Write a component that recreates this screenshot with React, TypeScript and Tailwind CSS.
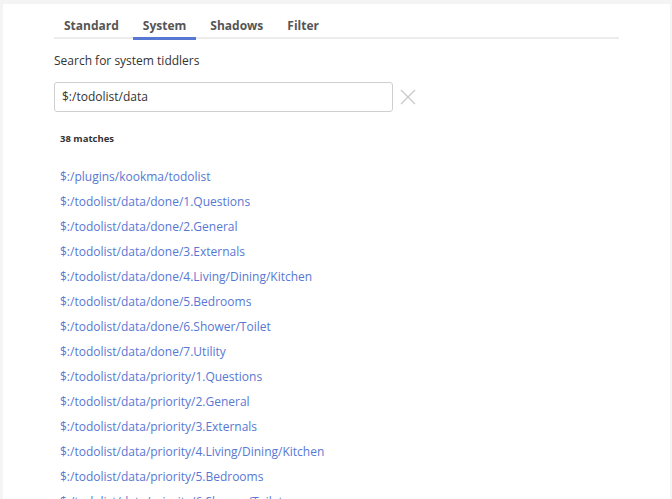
import React from "react";

const links = [
  "$:/plugins/kookma/todolist",
  "$:/todolist/data/done/1.Questions",
  "$:/todolist/data/done/2.General",
  "$:/todolist/data/done/3.Externals",
  "$:/todolist/data/done/4.Living/Dining/Kitchen",
  "$:/todolist/data/done/5.Bedrooms",
  "$:/todolist/data/done/6.Shower/Toilet",
  "$:/todolist/data/done/7.Utility",
  "$:/todolist/data/priority/1.Questions",
  "$:/todolist/data/priority/2.General",
  "$:/todolist/data/priority/3.Externals",
  "$:/todolist/data/priority/4.Living/Dining/Kitchen",
  "$:/todolist/data/priority/5.Bedrooms",
  "$:/todolist/data/priority/6.Shower/Toilet",
];

const tabs = ["Standard", "System", "Shadows", "Filter"];

export default function App() {
  return (
    <div
      className="h-[499px] overflow-hidden bg-[#f4f4f4] pl-[3px] pr-[2px] pt-[4px]"
      style={{ fontFamily: '"Open Sans", "Noto Sans", sans-serif' }}
    >
      <div className="h-[495px] overflow-hidden bg-white pl-[51px]">
        <div className="mt-[11px] flex w-[565px] gap-[4px] border-b-2 border-[#ececec]">
          {tabs.map((t) => (
            <div
              key={t}
              className="relative h-[22px] px-[10px] text-[12px] font-bold leading-[22px] text-[#555]"
            >
              {t}
              {t === "System" && (
                <span className="absolute bottom-[-3px] left-0 right-0 h-[3px] bg-[#5778d2]" />
              )}
            </div>
          ))}
        </div>
        <div className="mt-[13px] text-[12px] leading-[18px] text-[#333]">
          Search for system tiddlers
        </div>
        <div className="mt-[12px] flex items-center">
          <div className="flex h-[30px] w-[339px] items-center rounded-[3px] border border-[#cfcfcf] px-[7px] text-[12px] text-[#333]">
            $:/todolist/data
          </div>
          <svg
            className="ml-[7px]"
            width="16"
            height="16"
            viewBox="0 0 16 16"
            fill="none"
            stroke="#c8c8c8"
            strokeWidth="1.3"
          >
            <path d="M1 1 L15 15 M15 1 L1 15" />
          </svg>
        </div>
        <div className="ml-[6px] mt-[20px] text-[9.5px] font-bold leading-[14px] text-[#333]">
          38 matches
        </div>
        <div className="ml-[6px] mt-[18px] flex flex-col">
          {links.map((l) => (
            <a
              key={l}
              className="h-[25px] text-[12px] leading-[25px] text-[#5778d2]"
            >
              {l}
            </a>
          ))}
        </div>
      </div>
    </div>
  );
}
